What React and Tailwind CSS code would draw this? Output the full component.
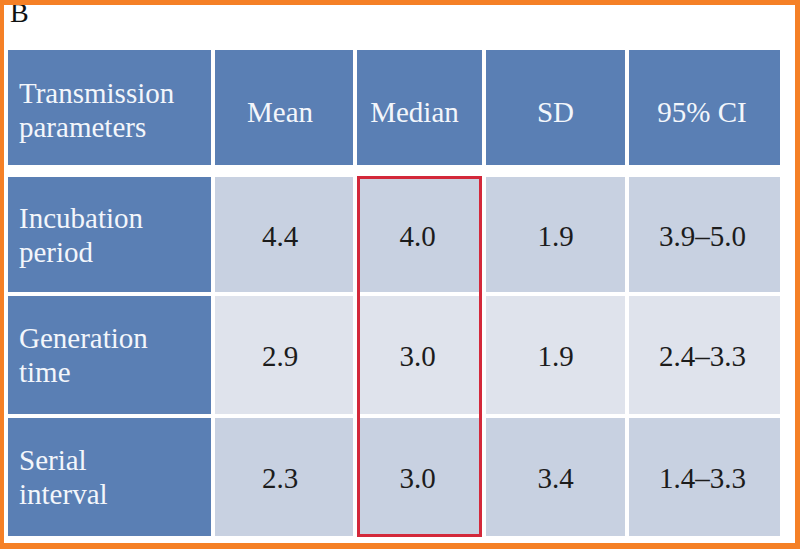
import React from "react";

const headers = [
  { text: "Mean", pad: "pr-[8px]" },
  { text: "Median", pad: "pr-[10px]" },
  { text: "SD", pad: "" },
  { text: "95% CI", pad: "pr-[5px]" },
];

const pads = ["pr-[8px]", "pr-[4px]", "", "pr-[4px]"];

const rows = [
  { label: ["Incubation", "period"], values: ["4.4", "4.0", "1.9", "3.9–5.0"], tone: "bg-[#c8d1e1]" },
  { label: ["Generation", "time"], values: ["2.9", "3.0", "1.9", "2.4–3.3"], tone: "bg-[#dfe3ec]" },
  { label: ["Serial", "interval"], values: ["2.3", "3.0", "3.4", "1.4–3.3"], tone: "bg-[#c8d1e1]" },
];

const cols = "grid grid-cols-[203px_138px_125px_139px_151px] gap-x-[4px]";

const App = () => {
  return (
    <div className="w-[800px] h-[549px] bg-[#f58026] pt-[5px] pl-[4px] pr-[5px] pb-[6px] overflow-hidden font-['Liberation_Serif','Times_New_Roman',serif]">
      <div className="w-full h-full bg-white relative overflow-hidden">
        {/* panel letter, sits right under the frame */}
        <div className="absolute left-[6px] top-0 text-[28px] leading-[16px] text-[#111]">B</div>

        <div className="pt-[45px] pl-[4px] flex flex-col">
          {/* header */}
          <div className={`${cols} h-[115px]`}>
            <div className="bg-[#5a7fb4] text-[#f3f6fb] text-[29px] leading-[34px] pl-[11px] pt-[5px] flex flex-col justify-center">
              <span>Transmission</span>
              <span>parameters</span>
            </div>
            {headers.map((h) => (
              <div
                key={h.text}
                className={`bg-[#5a7fb4] text-[#f3f6fb] text-[29px] leading-[34px] pt-[8px] ${h.pad} flex items-center justify-center`}
              >
                {h.text}
              </div>
            ))}
          </div>

          {/* body */}
          <div className="relative mt-[12px] flex flex-col gap-y-[4px]">
            {rows.map((r, i) => (
              <div key={i} className={`${cols} ${i === 0 ? "h-[115px]" : "h-[118px]"}`}>
                <div className="bg-[#5a7fb4] text-[#f3f6fb] text-[29px] leading-[34px] pl-[11px] flex flex-col justify-center">
                  <span>{r.label[0]}</span>
                  <span>{r.label[1]}</span>
                </div>
                {r.values.map((v, j) => (
                  <div
                    key={j}
                    className={`${r.tone} text-[#1c1c1c] text-[29px] leading-[34px] pt-[2px] ${pads[j]} flex items-center justify-center`}
                  >
                    {v}
                  </div>
                ))}
              </div>
            ))}

            {/* highlight around the median column */}
            <div className="absolute left-[349px] top-[-1px] w-[125px] h-[361px] border-[3px] border-[#d3283a] pointer-events-none" />
          </div>
        </div>
      </div>
    </div>
  );
};

export default App;
